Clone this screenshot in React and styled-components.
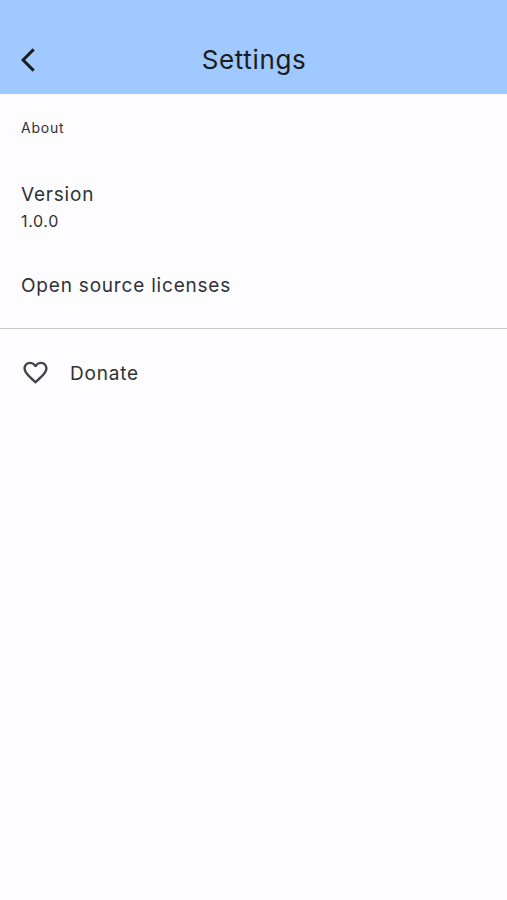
import React from "react";
import styled, { createGlobalStyle } from "styled-components";
import { MdArrowBackIosNew, MdFavoriteBorder } from "react-icons/md";

const GlobalStyle = createGlobalStyle`
	* {
		box-sizing: border-box;
	}

	body {
		margin: 0;
		background: #fdfdff;
		color: #303134;
		font-family: Inter, "Liberation Sans", sans-serif;
	}
`;

const Screen = styled.div`
	display: flex;
	flex-direction: column;
	min-height: 100vh;
`;

const AppBar = styled.header`
	display: grid;
	grid-template-columns: 55px 1fr 54px;
	align-items: center;
	height: 94px;
	padding-top: 26px;
	background: #9fc9ff;
	color: #1b1c20;
`;

const BackButton = styled.button`
	display: flex;
	justify-content: center;
	padding: 0;
	border: 0;
	background: none;
	color: inherit;
	font-size: 28px;
`;

const Title = styled.h1`
	margin: 0;
	font-size: 26px;
	font-weight: 400;
	line-height: 32px;
	letter-spacing: 0.65px;
	text-align: center;
`;

const SectionLabel = styled.h2`
	margin: 0;
	padding: 24px 21px 16px;
	font-size: 14px;
	font-weight: 400;
	line-height: 20px;
	letter-spacing: 0.8px;
`;

const Tile = styled.div`
	display: flex;
	align-items: center;
	gap: 20px;
	height: ${({ $height }) => $height}px;
	padding: 0 21px;
`;

const TileTitle = styled.div`
	font-size: 19px;
	line-height: 28px;
	letter-spacing: 0.8px;
`;

const TileSubtitle = styled.div`
	font-size: 16px;
	line-height: 24px;
	letter-spacing: 0.65px;
`;

const TileIcon = styled.span`
	display: flex;
	padding-bottom: 3px;
	color: #44464c;
	font-size: 29px;
`;

const Divider = styled.hr`
	width: 100%;
	height: 1px;
	margin: 16px 0;
	border: 0;
	background: #c5c6cb;
`;

const App = () => {
	return (
		<React.Fragment>
			<GlobalStyle />
			<Screen>
				<AppBar>
					<BackButton aria-label="Back">
						<MdArrowBackIosNew />
					</BackButton>
					<Title>Settings</Title>
				</AppBar>
				<main>
					<SectionLabel>About</SectionLabel>
					<Tile $height={106}>
						<div>
							<TileTitle>Version</TileTitle>
							<TileSubtitle>1.0.0</TileSubtitle>
						</div>
					</Tile>
					<Tile $height={52}>
						<TileTitle>Open source licenses</TileTitle>
					</Tile>
					<Divider />
					<Tile $height={58}>
						<TileIcon>
							<MdFavoriteBorder />
						</TileIcon>
						<TileTitle>Donate</TileTitle>
					</Tile>
				</main>
			</Screen>
		</React.Fragment>
	);
};

export default App;
